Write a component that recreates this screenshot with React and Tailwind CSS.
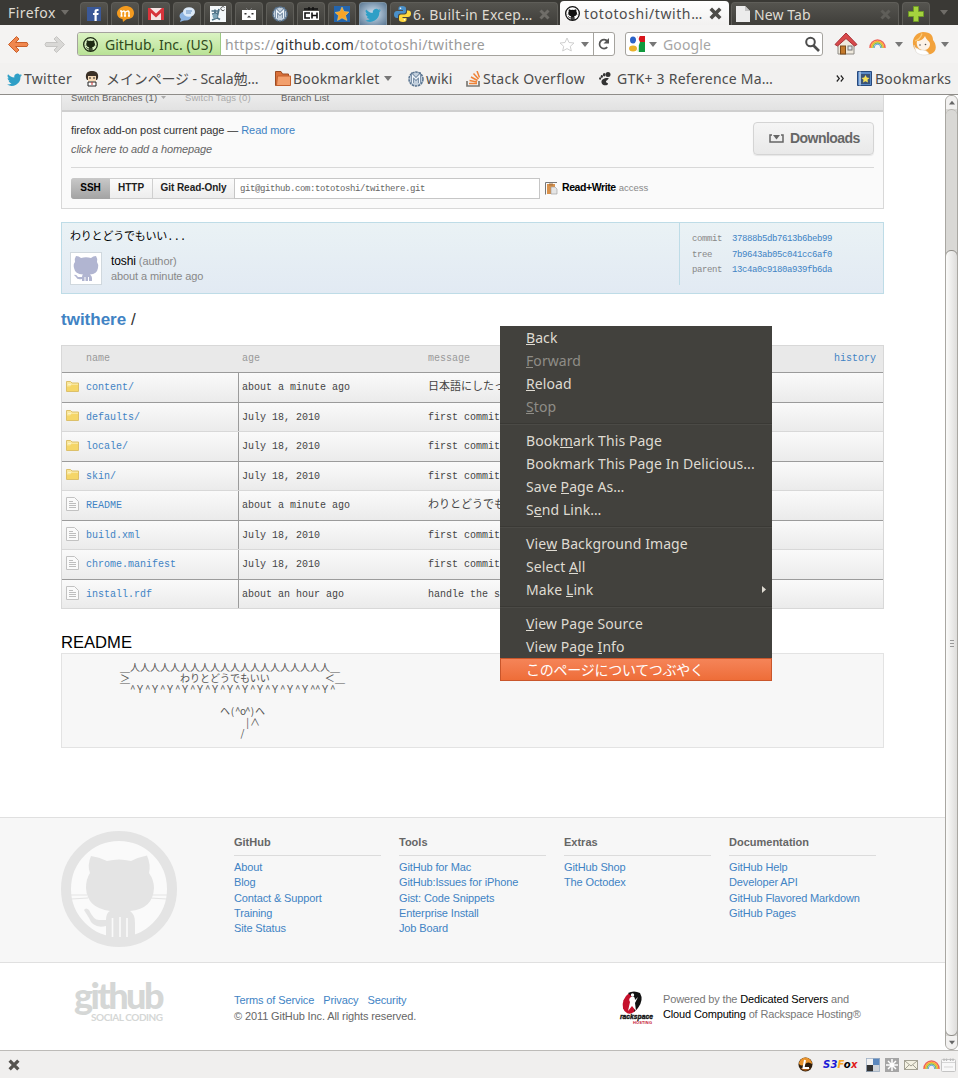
import React from 'react';

const UI = "font-['Noto_Sans','Noto_Sans_CJK_JP',sans-serif]";
const MONO = "font-['Liberation_Mono','Noto_Sans_CJK_JP',monospace]";

function Octocat({ size, color, hole }) {
  return (
    <svg width={size} height={size} viewBox="0 0 116 116" className="block shrink-0">
      <circle cx="58" cy="58" r="53" fill={hole} stroke={color} strokeWidth="10" />
      <path d="M10 64H26M90 64H106M10 68L27 67M89 67L106 68" stroke={color} strokeWidth="1" fill="none" />
      <path
        d="M30 25Q38 26 46 30Q58 27 70 30Q78 26 86 24.500Q90 34 88 42Q93 49 93 57Q92 78 69 80Q74 83 74 92V109H45V95Q32 98 28 87L23 79Q25 76 28 79Q33 90 39 89H45Q45 82 49 80Q26 77 25 57Q25 48 29 42Q26 34 30 25Z"
        fill={color}
      />
      <path d="M51.500 87V106M59 86V106M66 87V106" stroke={hole} strokeWidth="1.600" fill="none" />
    </svg>
  );
}

function Bird({ size }) {
  return (
    <svg width={size} height={size} viewBox="0 0 24 24" className="block shrink-0">
      <path
        fill="#2f9fc6"
        d="M23.900 6.500c-.9.400-1.800.6-2.800.8 1-.6 1.800-1.600 2.200-2.700-1 .6-2 1-3.100 1.200a4.900 4.900 0 0 0-8.400 4.500C7.700 10.100 4.100 8.100 1.700 5.100a4.900 4.900 0 0 0 1.500 6.600c-.8 0-1.600-.2-2.200-.6v.1c0 2.400 1.700 4.400 3.900 4.800-.7.200-1.500.2-2.200.1.600 2 2.400 3.400 4.600 3.400A9.900 9.900 0 0 1 0 21.500 14 14 0 0 0 21.500 9.100c.9-.7 1.800-1.600 2.400-2.600z"
      />
    </svg>
  );
}

function Down({ className = '', color = '#8a8883' }) {
  return (
    <svg width="8" height="5" viewBox="0 0 8 5" className={`block shrink-0 ${className}`}>
      <path d="M0 0H8L4 5Z" fill={color} />
    </svg>
  );
}

function WikiIcon() {
  return (
    <svg width="16" height="16" viewBox="0 0 16 16" className="block shrink-0">
      <circle cx="8" cy="8" r="7" fill="#c3d0dd" stroke="#58738f" strokeWidth="1.500" strokeDasharray="2.500 .7" />
      <path d="M4.500 12V4.500L8 8L11.500 4.500V12" fill="none" stroke="#58738f" strokeWidth="3" />
      <path d="M4.500 12V4.500L8 8L11.500 4.500V12" fill="none" stroke="#eef4f9" strokeWidth="1.500" />
    </svg>
  );
}

function Rainbow() {
  return (
    <svg width="17" height="12" viewBox="0 0 17 12" className="block shrink-0">
      <path d="M1 10A7.500 8 0 0 1 16 10" fill="none" stroke="#f0625a" strokeWidth="1.500" />
      <path d="M2.500 10A6 6.500 0 0 1 14.500 10" fill="none" stroke="#fbb02a" strokeWidth="1.600" />
      <path d="M4 10A4.500 5 0 0 1 13 10" fill="none" stroke="#7cc04a" strokeWidth="1.300" />
      <path d="M5.300 10A3.200 3.800 0 0 1 11.700 10" fill="none" stroke="#6fa6e0" strokeWidth="1.200" />
    </svg>
  );
}

function Python() {
  return (
    <svg width="17" height="16" viewBox="0 0 17 16" className="block shrink-0">
      <path d="M8 0C5 0 4.500 1 4.500 2.500V4H9V5H3C1 5 0 6.500 0 8.500S1 12 3 12H4V10C4 8.500 5 7.500 6.500 7.500H10C11.500 7.500 12 6.500 12 5V2.500C12 1 11 0 8 0Z" fill="#4a90c9" />
      <path d="M9 16C12 16 12.500 15 12.500 13.500V12H8.500V11H14C16 11 17 9.500 17 7.500S16 4.500 14 4.500H13V6C13 7.500 12 8.500 10.500 8.500H7C5.500 8.500 5 9.500 5 11V13.500C5 15 6 16 9 16Z" fill="#ffd83d" />
      <circle cx="6.500" cy="2.200" r=".8" fill="#fff" />
      <circle cx="10.500" cy="13.800" r=".8" fill="#fff" />
    </svg>
  );
}

function Close({ color, size = 11 }) {
  return (
    <svg width={size} height={size} viewBox="0 0 11 11" className="block shrink-0">
      <path d="M1.500 1.500L9.500 9.500M9.500 1.500L1.500 9.500" stroke={color} strokeWidth="3" />
    </svg>
  );
}

const pinned = [
  <svg key="f" width="14" height="14" viewBox="0 0 14 14"><rect width="14" height="14" fill="#3a5897" /><path d="M7.500 14V8H6V6H7.500V4.500C7.500 2.500 8.500 1.800 11.500 2V4H10.500C9.800 4 9.700 4.300 9.700 5V6H11.700L11.300 8H9.700V14Z" fill="#fff" /></svg>,
  <svg key="m" width="17" height="16" viewBox="0 0 17 16"><path d="M8.500 0C13 0 17 2.500 17 7S13.500 13 9.500 13.200L6 16L5.500 13C2 12.500 0 10 0 7S4 0 8.500 0Z" fill="#f39a1e" /><path d="M4.500 10V5M4.500 6.500Q6.500 4 8 6V10M8 6.500Q11 4 12 6V10M3 5H5M3.500 10H5.500M7 10H9M11 10H13" stroke="#fff" strokeWidth="1.500" fill="none" /></svg>,
  <svg key="g" width="16" height="12" viewBox="0 0 16 12"><rect width="16" height="12" rx="1" fill="#f4e3e3" /><path d="M1.500 12V1.500L8 7.500L14.500 1.500V12" fill="none" stroke="#d8343b" strokeWidth="3" /></svg>,
  <svg key="c" width="16" height="15" viewBox="0 0 16 15"><ellipse cx="6.500" cy="9" rx="6" ry="4.500" fill="#8db4e2" /><path d="M2 12L1 15L6 13Z" fill="#8db4e2" /><ellipse cx="10" cy="5" rx="6" ry="4.800" fill="#dbe9f8" /><path d="M7 4H13M7 6H12" stroke="#6390c4" /></svg>,
  <svg key="a" width="16" height="16" viewBox="0 0 16 16"><rect width="16" height="16" fill="#f4f8fa" /><path d="M1.500 5H9M5 3.500V9M2 8L9 7M4 10L10 13.500M9 3L7 12L2 14" stroke="#4d7186" strokeWidth="1.700" fill="none" /><path d="M14.500 3.800A2 2 0 1 1 14.500 1.500" stroke="#555" fill="none" /><circle cx="5" cy="10" r="2.500" fill="#7fa6b9" /></svg>,
  <svg key="b" width="14" height="12" viewBox="0 0 14 12"><rect y="2" width="14" height="10" fill="#fff" /><path d="M4 0L6 2M10 0L8 2" stroke="#777" /><rect x="2.500" y="5" width="2" height="1.500" fill="#333" /><rect x="9.500" y="5" width="2" height="1.500" fill="#333" /><path d="M5 9.500L7 7.500L9 9.500Z" fill="#333" /></svg>,
  <WikiIcon key="w" />,
  <svg key="h" width="16" height="15" viewBox="0 0 16 15"><path d="M1 2H15M6 0V3M10 0V3" stroke="#111" strokeWidth="1.500" /><rect y="4" width="16" height="9" fill="#fff" /><path d="M7 6H2V11H7M9 5.500V11.500M14 5.500V11.500M9 8.500H14" stroke="#111" strokeWidth="1.600" fill="none" /></svg>,
  <svg key="s" width="16" height="16" viewBox="0 0 16 16"><rect width="16" height="16" fill="#2465ad" /><path d="M8 1L10 5.500L15 6L11.500 9.500L13 14.500L8 12L3.500 14.500L4.500 9.500L1 6.500L6 5.500Z" fill="#f8a427" stroke="#f4d070" strokeWidth=".5" /></svg>,
];

const TAB = 'h-[23px] shrink-0 rounded-t-[4px] border border-b-0 border-[#5f5e59] bg-linear-to-b from-[#55544f] to-[#3f3e3a] flex items-center';

function TabBar() {
  return (
    <div className={`flex h-[25px] items-end bg-[#3a3935] text-[14px] text-[#dfdbd2] ${UI}`}>
      <div className="flex h-[25px] w-[80px] shrink-0 items-center gap-[4px] pl-[8px]">
        <span className="w-[49px] tracking-[0.450px] whitespace-nowrap">Firefox</span>
        <Down color="#6f6d68" />
      </div>
      <div className="flex gap-[3px]">
        {pinned.map((icon, i) => (
          <div key={i} className={`${TAB} w-[28px] justify-center`}>{icon}</div>
        ))}
        <div className="flex h-[23px] w-[28px] items-center justify-center rounded-t-[4px] border border-b-0 border-[#7d93a5] bg-radial from-[#d4e5f4] to-[#5b7893]">
          <Bird size={16} />
        </div>
        <div className={`${TAB} w-[168px] pr-[7px] pl-[3px]`}>
          <Python />
          <span className="ml-[2px] flex-1 tracking-[0.250px] whitespace-nowrap">6. Built-in Excep…</span>
          <Close color="#6f6d68" />
        </div>
      </div>
      <div className="ml-[2px] flex h-[24px] w-[169px] shrink-0 items-center rounded-t-[4px] bg-linear-to-b from-white to-[#f2f1f0] pr-[7px] pl-[5px] text-[#4c4c4c]">
        <Octocat size={15} color="#111" hole="#fff" />
        <span className="ml-[4px] flex-1 tracking-[0.600px] whitespace-nowrap">tototoshi/twith…</span>
        <Close color="#4d4c48" size={13} />
      </div>
      <div className={`${TAB} ml-[2px] w-[168px] pr-[7px] pl-[4px]`}>
        <svg width="14" height="16" viewBox="0 0 14 16"><path d="M0 0H9L14 5V16H0Z" fill="#ececec" /><path d="M9 0V5H14Z" fill="#c4c4c4" /></svg>
        <span className="ml-[4px] flex-1 tracking-[0.100px] whitespace-nowrap">New Tab</span>
        <Close color="#5f5e59" />
      </div>
      <div className={`${TAB} ml-[3px] w-[28px] justify-center`}>
        <svg width="16" height="16" viewBox="0 0 16 16"><path d="M5.500 .5H10.500V5.500H15.500V10.500H10.500V15.500H5.500V10.500H.5V5.500H5.500Z" fill="#a5d23e" stroke="#6f9a26" /></svg>
      </div>
      <div className="flex h-[25px] flex-1 items-center justify-center"><Down color="#6f6d68" /></div>
    </div>
  );
}

function Arrow({ fill, stroke, flip }) {
  return (
    <svg width="23" height="19" viewBox="0 0 23 19" className={flip ? '-scale-x-100' : ''}>
      <path d="M9.500 1.500L1.500 9.500L9.500 17.500L12 15L8.500 11.500H20Q22 9.500 20 7.500H8.500L12 4Z" fill={fill} stroke={stroke} strokeLinejoin="round" />
    </svg>
  );
}

function NavBar() {
  return (
    <div className={`flex h-[38px] items-center bg-[#f4f3f2] text-[14px] ${UI}`}>
      <div className="flex w-[77px] shrink-0 gap-[13px] pl-[7px]">
        <Arrow fill="#f0874e" stroke="#c9602c" />
        <Arrow fill="#d9d8d6" stroke="#c6c5c3" flip />
      </div>
      <div className="flex h-[24px] w-[538px] shrink-0 items-center overflow-hidden rounded-[3px] border border-[#a5a39e] bg-white">
        <div className="flex h-full w-[143px] shrink-0 items-center gap-[7px] border-r border-[#9cc983] bg-linear-to-b from-[#dbf3c3] to-[#b9e296] pl-[5px] text-[#2f4a1c]">
          <Octocat size={15} color="#1d2a14" hole="#d9f2c2" />
          <span className="whitespace-nowrap">GitHub, Inc. (US)</span>
        </div>
        <span className="ml-[4px] flex-1 tracking-[0.320px] whitespace-nowrap text-[#9a9a9a]">https://<span className="text-[#333]">github.com</span>/tototoshi/twithere</span>
        <svg width="16" height="15" viewBox="0 0 16 15" className="mr-[6px]"><path d="M8 1L10 5.500L15 6L11.300 9.300L12.300 14L8 11.600L3.700 14L4.700 9.300L1 6L6 5.500Z" fill="#fff" stroke="#cfcfcf" /></svg>
        <Down className="mr-[4px]" color="#777" />
        <div className="flex h-full w-[21px] shrink-0 items-center justify-center border-l border-[#a5a39e]">
          <svg width="12" height="12" viewBox="0 0 12 12"><path d="M9.300 9.200A4.500 4.500 0 1 1 9.500 3.200" fill="none" stroke="#555" strokeWidth="1.700" /><path d="M11 0V5.500H5.500Z" fill="#555" /></svg>
        </div>
      </div>
      <div className="ml-[10px] flex h-[24px] w-[198px] shrink-0 items-center rounded-[3px] border border-[#a5a39e] bg-white">
        <svg width="17" height="16" viewBox="0 0 17 16" className="ml-[2px]"><path d="M0 0H17V16H0Z" fill="#fff" /><path d="M9 0H17V6H12Z" fill="#d8151c" /><path d="M12 6H17V16H9L11 9Z" fill="#119a3e" /><ellipse cx="5" cy="4" rx="3" ry="3.500" fill="#2a62c8" /><ellipse cx="5" cy="12.500" rx="4" ry="3" fill="#e9b12b" /><path d="M8 0H11L8 7L10 11V16H7" fill="none" stroke="#fff" strokeWidth="1.500" /></svg>
        <Down className="ml-[4px]" color="#777" />
        <span className="ml-[6px] flex-1 tracking-[0.150px] text-[#a6a6a6]">Google</span>
        <svg width="16" height="16" viewBox="0 0 16 16" className="mr-[2px]"><circle cx="6.500" cy="6" r="4.300" fill="none" stroke="#4d4d4d" strokeWidth="2" /><path d="M9.500 9.500L15 15" stroke="#4d4d4d" strokeWidth="2.600" /></svg>
      </div>
      <svg width="24" height="24" viewBox="0 0 24 24" className="ml-[11px] shrink-0">
        <path d="M4 11L12 5L20 11V22H4Z" fill="#efe9dd" stroke="#8d8a84" />
        <path d="M1 12.500L12 1L23 12.500L20.500 14L12 6.500L3.500 14Z" fill="#d9494b" stroke="#a83237" />
        <rect x="6.500" y="14" width="5" height="8" fill="#c47a2c" stroke="#7c4b18" />
        <rect x="14" y="14" width="4" height="4" fill="#dfe8ef" stroke="#777" />
      </svg>
      <div className="ml-[11px]"><Rainbow /></div>
      <Down className="ml-[9px]" color="#777" />
      <svg width="25" height="24" viewBox="0 0 25 24" className="ml-[9px] shrink-0">
        <path d="M11 0C19 0 21 4 21 8C25 13 25 20 19 22C15 23 5 22 2 16C-1 9 2 1 11 0Z" fill="#f2a23c" />
        <path d="M5 9C8 9 12 7 13 4C14 8 18 9 18 12C18 16 14 19 10 18C6 17 4 13 5 9Z" fill="#fdf3e8" />
        <path d="M2 13C3 17 6 16 8 18C12 18 15 18 17 22C13 24 7 23 4 20Z" fill="#fff" stroke="#dcd8d2" strokeWidth=".6" />
        <path d="M3 9C6 8 9 5 10 1.500" stroke="#fbcb7a" strokeWidth="1.200" fill="none" />
        <circle cx="8" cy="13" r=".8" fill="#555" /><circle cx="13.500" cy="12.500" r=".8" fill="#555" />
      </svg>
      <Down className="ml-[4px]" color="#777" />
    </div>
  );
}

function BookmarksBar() {
  return (
    <div className={`flex h-[32px] items-center border-b border-[#8f8d89] bg-[#f2f1f0] text-[14px] whitespace-nowrap text-[#4c4c4c] ${UI}`}>
      <div className="flex w-[85px] shrink-0 items-center gap-[2px] pl-[7px]"><Bird size={15} /><span className="tracking-[0.300px]">Twitter</span></div>
      <div className="flex w-[190px] shrink-0 items-center gap-[7px]">
        <svg width="14" height="16" viewBox="0 0 14 16"><path d="M1 7C0 1 4 0 7 0S14 1 13 7L12 9H2Z" fill="#3b3127" /><rect x="3" y="5" width="8" height="5.500" fill="#f5d9b5" /><path d="M4 7H6M8 7H10" stroke="#222" /><path d="M3 11H11V15H3Z" fill="#fff" stroke="#222" /><path d="M7 11V14" stroke="#c33" /></svg>
        <span className="tracking-[-0.120px]">メインページ - Scala勉…</span>
      </div>
      <div className="flex w-[133px] shrink-0 items-center">
        <svg width="16" height="15" viewBox="0 0 16 15"><path d="M.5 14.500V.5H6L7.500 3H13.500V14.500Z" fill="#d9713a" stroke="#9d4b22" /><path d="M2.500 5H15.500V14.500H1.500Z" fill="#f29f6c" stroke="#c5602d" /></svg>
        <span className="ml-[2px] w-[91px] tracking-[0.200px]">Bookmarklet</span>
        <Down color="#777" />
      </div>
      <div className="flex w-[58px] shrink-0 items-center gap-[2px]"><WikiIcon /><span className="tracking-[0.200px]">wiki</span></div>
      <div className="flex w-[133px] shrink-0 items-center gap-[3px]">
        <svg width="14" height="16" viewBox="0 0 14 16"><path d="M1 10V15H13V10" fill="none" stroke="#7b7974" strokeWidth="1.700" /><path d="M3 12.500H11M3.500 9.500L11 11M5 6L11.500 9.500M7.500 2.500L12.500 8M11 0L13.500 6.500" stroke="#ef8236" strokeWidth="1.500" /></svg>
        <span className="tracking-[0.300px]">Stack Overflow</span>
      </div>
      <div className="flex w-[240px] shrink-0 items-center gap-[6px]">
        <svg width="12" height="14" viewBox="0 0 12 14"><ellipse cx="9" cy="2.500" rx="2.500" ry="2.500" fill="#333" /><ellipse cx="5.200" cy="2.800" rx="1.300" ry="1.800" fill="#333" /><ellipse cx="2.800" cy="4.500" rx="1.100" ry="1.400" fill="#333" /><ellipse cx="1.100" cy="6.500" rx="1" ry="1.200" fill="#333" /><path d="M9.500 6C6 5.500 2 7 2.500 10.500S8.500 14 9 12C9.300 10.500 6.500 11 7 9.500S10 7.500 9.500 6Z" fill="#333" /></svg>
        <span className="tracking-[0.250px]">GTK+ 3 Reference Ma…</span>
      </div>
      <svg width="8" height="7" viewBox="0 0 8 7" className="mr-[13px] ml-[-3px] shrink-0"><path d="M.8 .5L3.300 3.500L.8 6.500M4.800 .5L7.300 3.500L4.800 6.500" fill="none" stroke="#222" strokeWidth="1.200" /></svg>
      <svg width="15" height="15" viewBox="0 0 15 15" className="shrink-0"><path d="M.5 .5H14.500V14.500H.5Z" fill="#5b8bc7" stroke="#27497c" /><path d="M3 .5V14.500" stroke="#e8eef6" /><rect x="4" y="3" width="9" height="10" fill="#3a5378" /><path d="M8.500 4L9.800 6.500L12.500 6.900L10.500 8.800L11 11.500L8.500 10.200L6 11.500L6.500 8.800L4.500 6.900L7.200 6.500Z" fill="#f7e15a" /></svg>
      <span className="ml-[3px] tracking-[0.200px]">Bookmarks</span>
    </div>
  );
}

function RepoHeader() {
  return (
    <section className="flex h-[114px] flex-col overflow-hidden border-x border-b border-[#d8d8d8] bg-[#fafafa]">
      <div className="flex h-[17px] shrink-0 items-start border-b-2 border-[#cfcfcf] bg-linear-to-b from-[#ececec] to-[#e2e2e2] pl-[9px] text-[9.500px] leading-[13px] tracking-[0.060px] whitespace-nowrap text-[#666]">
        <span className="-mt-[4px] flex w-[114px] items-center gap-[4px]">Switch Branches (1) <Down className="w-[5px]" color="#aaa" /></span>
        <span className="-mt-[4px] w-[96px] text-[#aaa]">Switch Tags (0)</span>
        <span className="-mt-[4px]">Branch List</span>
      </div>
      <div className="mx-[9px] flex h-[56px] shrink-0 justify-between border-b border-[#d8d8d8]">
        <div className="pt-[9px] text-[11px] leading-[19px] tracking-[-0.080px] text-[#333]">
          <p>firefox add-on post current page — <a className="text-[#4183c4]">Read more</a></p>
          <p className="tracking-[-0.120px] text-[#666] italic">click here to add a homepage</p>
        </div>
        <div className="mt-[10px] flex h-[33px] w-[121px] items-center rounded-[4px] border border-[#d4d4d4] bg-linear-to-b from-[#f5f5f5] to-[#e9e9e9] pl-[15px] shadow-[0_1px_1px_rgba(0,0,0,.08)]">
          <svg width="15" height="9" viewBox="0 0 15 9"><path d="M3 1H1V8H14V1H12" fill="none" stroke="#666" strokeWidth="1.500" /><path d="M4 1H11L7.500 5.500Z" fill="#666" /></svg>
          <span className="ml-[6px] text-[14px] font-bold tracking-[-0.550px] text-[#666]">Downloads</span>
        </div>
      </div>
      <div className="flex h-[40px] items-center pl-[9px] text-[10px] font-bold text-[#222]">
        <div className="flex h-[21px] items-center rounded-l-[3px] border border-[#cfcfcf] bg-linear-to-b from-[#fbfbfb] to-[#ededed]">
          <span className="-my-px -ml-px flex h-[21px] w-[39px] items-center justify-center rounded-l-[3px] bg-linear-to-b from-[#c9c9c9] to-[#a3a3a3] pb-[2px] text-black">SSH</span>
          <span className="flex h-full w-[43px] items-center justify-center border-r border-[#cfcfcf] pb-[2px]">HTTP</span>
          <span className="flex h-full w-[81px] items-center justify-center pb-[2px] tracking-[-0.050px] whitespace-nowrap">Git Read-Only</span>
        </div>
        <div className={`-ml-px flex h-[21px] w-[306px] items-center border border-[#c6c6c6] bg-white pt-[3px] pl-[5px] text-[9px] font-normal tracking-[-0.400px] text-[#666] ${MONO}`}>
          git@github.com:tototoshi/twithere.git
        </div>
        <svg width="13" height="13" viewBox="0 0 13 13" className="ml-[5px]"><path d="M.5 12.500V.5H12" fill="none" stroke="#777" /><rect x="2" y="2" width="8" height="10" fill="#d9924c" /><rect x="4" y="1.500" width="4" height="2" fill="#b07a45" /><path d="M6 5H10L12 7V12H6Z" fill="#e5e5e5" stroke="#999" strokeWidth=".6" /></svg>
        <span className="ml-[4px] text-[10.500px] tracking-[-0.420px] whitespace-nowrap text-black">Read+Write</span>
        <span className="ml-[3px] text-[9.500px] font-normal text-[#888]">access</span>
      </div>
    </section>
  );
}

function CommitBox() {
  const rows = [
    ['commit', '37888b5db7613b6beb99'],
    ['tree', '7b9643ab05c041cc6af0'],
    ['parent', '13c4a0c9180a939fb6da'],
  ];
  return (
    <section className="mt-[13px] flex h-[72px] border border-[#bedce7] bg-linear-to-b from-[#eaf2f5] to-[#e2eaf3]">
      <div className="w-[617px] pl-[8px]">
        <p className="mt-[6px] h-[16px] font-['Liberation_Mono','Noto_Sans_CJK_JP',monospace] text-[11px] leading-[16px] tracking-[-0.200px] text-black">わりとどうでもいい...</p>
        <div className="mt-[7px] flex">
          <div className="flex h-[33px] w-[32px] items-center justify-center border border-[#d0d8de] bg-white">
            <svg width="26" height="27" viewBox="0 0 26 27"><path d="M3 1Q6 1 8 3Q13 1.500 18 3Q20 1 23 1Q25 4 24 7Q26 10 25 13Q24 19 17 19.500Q19 21 19 23V26H16V22H15V26H12.500V22H11.500V26H9V24Q4 25 3 22L1 20Q3 19 5 22H9Q9 20 10 19.500Q2 19 1 13Q0 9 2 7Q1 4 3 1Z" fill="#b1b5d1" /></svg>
          </div>
          <div className="ml-[9px] text-[11px] leading-[15px] tracking-[-0.100px] text-[#888]">
            <p className="mt-[2px]"><span className="text-[12px] text-black">toshi</span> (author)</p>
            <p>about a minute ago</p>
          </div>
        </div>
      </div>
      <div className={`mb-[8px] flex-1 border-l border-[#bedce7] pt-[9px] pl-[12px] text-[9px] leading-[15.500px] tracking-[-0.400px] ${MONO}`}>
        {rows.map(([k, v]) => (
          <div key={k} className="flex"><span className="w-[40px] text-[#888]">{k}</span><span className="text-[#4183c4]">{v}</span></div>
        ))}
      </div>
    </section>
  );
}

const files = [
  ['content/', 'about a minute ago', '日本語にしたっ', true],
  ['defaults/', 'July 18, 2010', 'first commit', true],
  ['locale/', 'July 18, 2010', 'first commit', true],
  ['skin/', 'July 18, 2010', 'first commit', true],
  ['README', 'about a minute ago', 'わりとどうでも', false],
  ['build.xml', 'July 18, 2010', 'first commit', false],
  ['chrome.manifest', 'July 18, 2010', 'first commit', false],
  ['install.rdf', 'about an hour ago', 'handle the s', false],
];

function Folder() {
  return (
    <svg width="13" height="11" viewBox="0 0 13 11"><path d="M.5 10.500V.5H4.500L6 2H12.500V10.500Z" fill="#f9e79d" stroke="#dcc06a" /><path d="M1 10V5.500H4L5.500 4H12V10Z" fill="#f5d668" /><path d="M2 3.500H5" stroke="#fdf3c2" /></svg>
  );
}

function FileIcon() {
  return (
    <svg width="13" height="14" viewBox="0 0 13 14"><path d="M.5 .5H8.500L12.500 4.500V13.500H.5Z" fill="#fafafa" stroke="#c2c2c2" /><path d="M3 4.500H7M3 6.500H10M3 8.500H10M3 10.500H10" stroke="#bdbdbd" /></svg>
  );
}

function FileTable() {
  return (
    <section className={`h-[264px] border-x border-t border-[#d8d8d8] text-[10px] text-[#444] ${MONO}`}>
      <div className="flex h-[27px] items-center border-b border-[#9b9b9b] bg-[#e9e9e9] pb-[2px] text-[#999]">
        <span className="w-[180px] pl-[24px]">name</span>
        <span className="w-[186px]">age</span>
        <span className="flex-1">message</span>
        <a className="pr-[7px] text-[#4183c4]">history</a>
      </div>
      {files.map(([name, age, msg, dir], i) => (
        <div
          key={name}
          className={`flex items-center border-b bg-linear-to-b from-[#fafafa] to-[#ebebeb] ${i % 2 ? 'h-[29px] border-[#d8d8d8]' : 'h-[30px] border-[#9b9b9b]'}`}
        >
          <div className="flex h-full w-[177px] items-center border-r border-[#9b9b9b] pl-[4px]">
            <span className="w-[20px] pb-[3px]">{dir ? <Folder /> : <FileIcon />}</span>
            <a className="text-[#4183c4]">{name}</a>
          </div>
          <span className="w-[189px] pl-[3px]">{age}</span>
          <span className={`whitespace-nowrap ${msg.charCodeAt(0) > 255 ? 'text-[11px]' : ''}`}>{msg}</span>
        </div>
      ))}
    </section>
  );
}

function H({ children }) {
  return <span className="inline-block w-[5px] text-center">{children}</span>;
}

function Readme() {
  return (
    <section>
      <h2 className="mt-[23px] h-[21px] text-[16.600px] leading-[21px] text-black">README</h2>
      <div className="h-[95px] overflow-hidden border border-[#e3e3e3] bg-[#f7f7f7] pt-[7px] pl-[58px] font-['Noto_Sans_CJK_JP',sans-serif] text-[10px] leading-[11px] whitespace-nowrap text-[#555]">
        <p className="h-[11px]">＿{'人'.repeat(20)}＿</p>
        <p className="h-[11px]">＞<span className="ml-[50px]">わりとどうでもいい</span><span className="ml-[55px]">＜</span></p>
        <p className="h-[11px]">
          ￣{Array.from({ length: 12 }, (_, i) => <React.Fragment key={i}><H>^</H>Ｙ</React.Fragment>)}<H>^</H><H>^</H>Ｙ<H>^</H>￣
        </p>
        <p className="mt-[11px] h-[11px] pl-[100px]">ヘ<H>(</H><H>^</H><H>o</H><H>^</H><H>)</H>ヘ</p>
        <p className="h-[11px] pl-[125px]"><H>|</H>∧</p>
        <p className="h-[11px] pl-[120px]"><H>/</H></p>
      </div>
    </section>
  );
}

const footerCols = [
  ['GitHub', ['About', 'Blog', 'Contact & Support', 'Training', 'Site Status']],
  ['Tools', ['GitHub for Mac', 'GitHub:Issues for iPhone', 'Gist: Code Snippets', 'Enterprise Install', 'Job Board']],
  ['Extras', ['GitHub Shop', 'The Octodex']],
  ['Documentation', ['GitHub Help', 'Developer API', 'GitHub Flavored Markdown', 'GitHub Pages']],
];

function Footer() {
  return (
    <footer className="mt-[69px] text-[11px]">
      <div className="flex h-[146px] border-y border-[#e0e0e0] bg-[#f7f7f7] pt-[13px] pl-[61px]">
        <Octocat size={116} color="#e4e4e4" hole="#fafafa" />
        <div className="ml-[57px] flex gap-[18px]">
          {footerCols.map(([title, links]) => (
            <div key={title} className="w-[147px]">
              <h3 className="h-[25px] border-b border-[#dcdcdc] pt-[3px] leading-[16px] font-bold text-[#666]">{title}</h3>
              <ul className="pt-[4px] leading-[15.300px] tracking-[-0.130px] whitespace-nowrap text-[#4183c4]">
                {links.map((l) => <li key={l}>{l}</li>)}
              </ul>
            </div>
          ))}
        </div>
      </div>
      <div className="flex h-[87px] pl-[74px]">
        <div className="mt-[14px] flex w-[160px] shrink-0 flex-col font-['Lato',sans-serif] text-[#d5d7d6]">
          <span className="text-[36px] leading-[37px] font-black tracking-[-2.600px]">github</span>
          <span className="-mt-[3px] pl-[17px] text-[10px] leading-[12px] font-bold tracking-[-0.450px] whitespace-nowrap">SOCIAL CODING</span>
        </div>
        <div className="w-[386px] shrink-0 pt-[29px] leading-[16px] tracking-[-0.110px] text-[#666]">
          <p className="flex gap-[9px] text-[#4183c4]"><a>Terms of Service</a><a>Privacy</a><a>Security</a></p>
          <p>© 2011 GitHub Inc. All rights reserved.</p>
        </div>
        <svg width="34" height="36" viewBox="0 0 34 36" className="mt-[27px] shrink-0 overflow-visible">
          <ellipse cx="11" cy="13" rx="8" ry="11" transform="rotate(20 11 13)" fill="#c5112c" />
          <path d="M8 3Q14 0 20 3Q24 10 18 18L14 22Q16 14 14 9Z" fill="#111" />
          <path d="M11 7Q15 5 15 10L18 7L15 13L16 21L12 16L8 21L10 12Q8 9 11 7Z" fill="#fff" />
          <circle cx="12.500" cy="5" r="1.700" fill="#fff" />
          <text x="0" y="29" fontFamily="Liberation Sans" fontSize="8" fontWeight="bold" fontStyle="italic" textLength="33" lengthAdjust="spacingAndGlyphs" stroke="#111" strokeWidth=".4" fill="#111">rackspace</text>
          <text x="13" y="34" fontFamily="Liberation Sans" fontSize="4" fontWeight="bold" textLength="19" fill="#c5112c">HOSTING</text>
        </svg>
        <div className="ml-[9px] pt-[29px] leading-[15px] tracking-[-0.150px] whitespace-nowrap text-[#777]">
          <p>Powered by the <span className="text-black">Dedicated Servers</span> and</p>
          <p><span className="text-black">Cloud Computing</span> of Rackspace Hosting®</p>
        </div>
      </div>
    </footer>
  );
}

function K({ children }) {
  return <span className="inline-block h-[17px] border-b border-current leading-[19px]">{children}</span>;
}

const menu = [
  [<><K>B</K>ack</>, [<K key="k">F</K>, 'orward'], <><K>R</K>eload</>, [<K key="k">S</K>, 'top']],
  [<>Book<K>m</K>ark This Page</>, 'Bookmark This Page In Delicious...', <>Save <K>P</K>age As…</>, <>S<K>e</K>nd Link…</>],
  [<>Vie<K>w</K> Background Image</>, <>Select <K>A</K>ll</>, <>Make <K>L</K>ink</>],
  [<><K>V</K>iew Page Source</>, <>View Page <K>I</K>nfo</>],
];

function ContextMenu() {
  return (
    <div className={`absolute top-[326px] left-[500px] h-[355px] w-[272px] bg-[#42413d] text-[14px] tracking-[0.080px] whitespace-nowrap text-[#dfdbd2] ${UI}`}>
      {menu.map((group, g) => (
        <div key={g}>
          {g > 0 && (
            <div className="flex h-[11px] items-center"><div className="h-[2px] w-full border-t border-b border-t-[#3a3935] border-b-[#4b4a46]" /></div>
          )}
          {group.map((item, i) => (
            <div key={i} className={`flex h-[23px] items-center justify-between pr-[6px] pl-[26px] ${Array.isArray(item) ? 'text-[#8f8d87]' : ''}`}>
              <span className="leading-[19px]">{item}</span>
              {g === 2 && i === 2 && <svg width="4" height="7" viewBox="0 0 4 7"><path d="M0 0L4 3.500L0 7Z" fill="#dfdbd2" /></svg>}
            </div>
          ))}
        </div>
      ))}
      <div className="flex h-[23px] items-center border border-[#c9562b] bg-linear-to-b from-[#f58458] to-[#ee6d38] pb-[1px] pl-[25px] text-white">
        <span className="tracking-[-0.250px]">このページについてつぶやく</span>
      </div>
    </div>
  );
}

function Scrollbar() {
  return (
    <div className="flex w-[13px] shrink-0 flex-col overflow-hidden rounded-[6px] border border-[#a9a7a2] bg-[#d9d8d5]">
      <div className="flex h-[13px] items-center justify-center bg-[#f2f1f0]"><Down className="w-[6px] rotate-180" color="#666" /></div>
      <div className="h-[141px] rounded-t-[6px] border-t border-[#b5b3ae]" />
      <div className="-mx-px flex flex-1 flex-col items-center justify-center gap-[2px] rounded-[6px] border border-[#8f8d88] bg-linear-to-r from-[#fbfbfa] to-[#dedddb]">
        <i className="h-px w-[4px] bg-[#999]" /><i className="h-px w-[4px] bg-[#999]" /><i className="h-px w-[4px] bg-[#999]" />
      </div>
      <div className="flex h-[13px] items-center justify-center bg-[#f2f1f0]"><Down className="w-[6px]" color="#666" /></div>
    </div>
  );
}

function StatusBar() {
  return (
    <div className="flex h-[28px] items-center border-t border-[#bdbbb8] bg-[#f0efee] pl-[8px]">
      <Close color="#55534f" size={12} />
      <div className="flex-1" />
      <svg width="15" height="15" viewBox="0 0 15 15"><circle cx="7.500" cy="7.500" r="7" fill="#2d1d0c" /><path d="M1 7A6.500 6.500 0 0 1 14 7Q10 4 7 7T1 7Z" fill="#e8932c" /><path d="M2.500 11A6 6 0 0 0 12.500 11Z" fill="#a85b16" /><path d="M7 3L5.500 11H11" fill="none" stroke="#fff" strokeWidth="2" /></svg>
      <span className="ml-[10px] w-[43px] font-['DejaVu_Sans',sans-serif] text-[10px] font-bold tracking-[0.200px] whitespace-nowrap italic">
        <span className="text-[#1a1ad6]">S3</span><span className="text-[#f5a623]">F</span><span className="text-black">o</span><span className="text-[#e01b1b]">x</span>
      </span>
      <svg width="14" height="14" viewBox="0 0 14 14"><rect width="14" height="14" fill="#c9ced6" /><rect width="7" height="7" fill="#f1f1f1" /><rect x="7" width="7" height="7" fill="#5b87bd" /><rect y="7" width="7" height="7" fill="#333" /><rect x="7" y="7" width="7" height="7" fill="#cfd3d8" /><rect x=".5" y=".5" width="13" height="13" fill="none" stroke="#9fb0c4" strokeWidth=".8" /></svg>
      <svg width="14" height="14" viewBox="0 0 14 14" className="ml-[5px]"><rect width="14" height="14" fill="#a5a5a5" /><path d="M7 1V13M1 7H13M3 3L11 11M11 3L3 11" stroke="#fff" strokeWidth="1.500" /></svg>
      <svg width="14" height="10" viewBox="0 0 14 10" className="ml-[5px]"><rect x=".5" y=".5" width="13" height="9" fill="#f3f1e2" stroke="#a3a193" /><path d="M1 1L7 6L13 1M1 9L5 5M13 9L9 5" fill="none" stroke="#a3a193" /></svg>
      <div className="ml-[5px]"><Rainbow /></div>
      <svg width="16" height="16" viewBox="0 0 16 16" className="mr-[1px] ml-[1px]"><rect x=".5" y="2.500" width="14" height="12" rx="1" fill="#f8f8f8" stroke="#c4c4c4" /><path d="M1 5.500H14M3 10H12" stroke="#d5d5d5" /><path d="M3 4V1.500M5.500 4V1.500M9.500 4V1.500M12 4V1.500" stroke="#bbb" strokeWidth="1.300" /></svg>
    </div>
  );
}

export default function App() {
  return (
    <div className="relative flex h-[1078px] w-[958px] flex-col overflow-hidden bg-white font-['Liberation_Sans','Noto_Sans_CJK_JP',sans-serif]">
      <TabBar />
      <NavBar />
      <BookmarksBar />
      <div className="flex h-[955px] shrink-0">
        <main className="w-[945px] overflow-hidden bg-white">
          <div className="ml-[61px] w-[823px]">
            <RepoHeader />
            <CommitBox />
            <h1 className="mt-[15px] mb-[15px] h-[21px] text-[17px] leading-[21px] text-[#333]"><a className="font-bold text-[#4183c4]">twithere</a> /</h1>
            <FileTable />
            <Readme />
          </div>
          <Footer />
        </main>
        <Scrollbar />
      </div>
      <StatusBar />
      <ContextMenu />
    </div>
  );
}
